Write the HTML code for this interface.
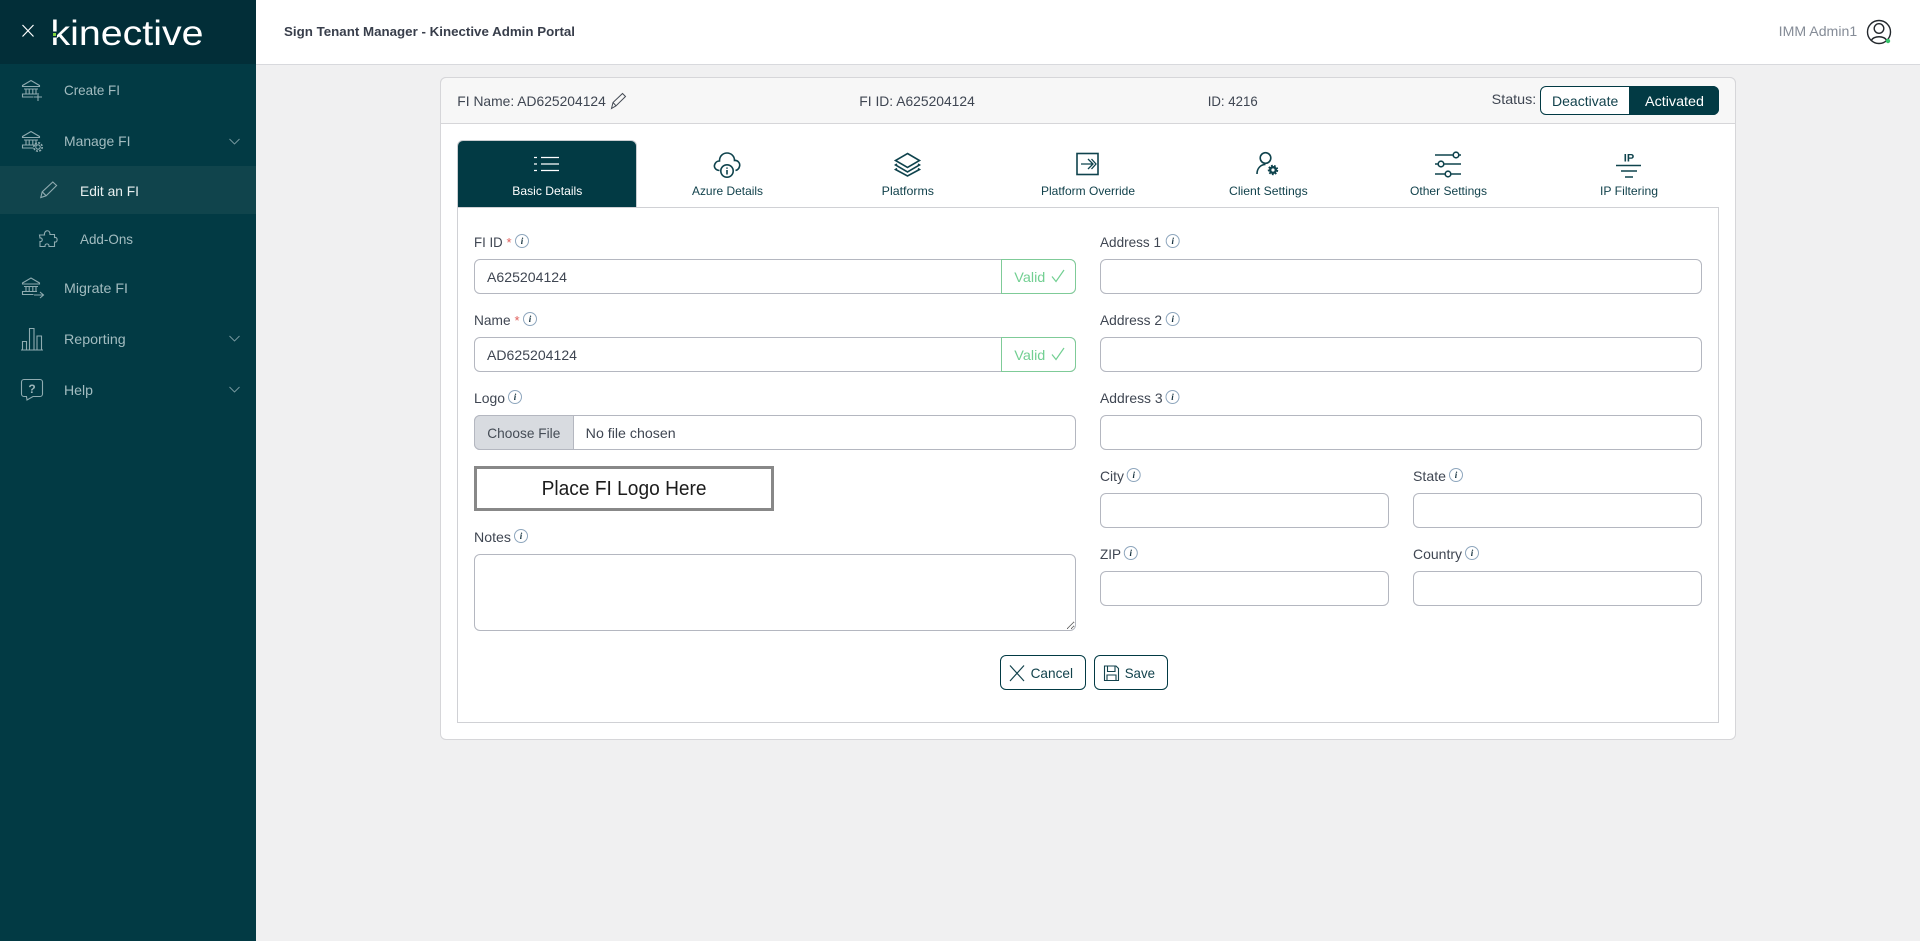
<!DOCTYPE html>
<html lang="en">
<head>
<meta charset="utf-8">
<title>Sign Tenant Manager - Kinective Admin Portal</title>
<style>
html,body{margin:0;padding:0;width:1920px;height:941px;overflow:hidden;background:#f0f0f1;font-family:"Liberation Sans",sans-serif}
.a{position:absolute;box-sizing:border-box}
input.f,textarea.f{position:absolute;box-sizing:border-box;border:1px solid #b4b7c0;border-radius:6px;background:#fff;margin:0;padding:0;outline:0}
textarea.f{resize:vertical}
#ov{position:absolute;left:0;top:0;pointer-events:none}
#ov text{font-family:"Liberation Sans",sans-serif;font-size:14px}
.s{fill:#a3bcc0}
.l{fill:#3f4652}
.ic{fill:none;stroke:#8fabb0;stroke-width:1.1}
.ch{fill:none;stroke:#7a9ba1;stroke-width:.9}
.tb{fill:none;stroke:#0f434d;stroke-width:1.6}
.ii{fill:#fff;stroke:#8ea6bd;stroke-width:1}
#ov text.it{font-family:"Liberation Serif",serif;font-size:9px;font-style:italic;font-weight:bold;fill:#16323f;text-anchor:middle}
#ov text.tt{font-size:12px;fill:#12424c}
</style>
</head>
<body>
<div class="a" style="left:0;top:0;width:256px;height:941px;background:#023a44"></div>
<div class="a" style="left:0;top:0;width:256px;height:64px;background:#022e38"></div>
<div class="a" style="left:0;top:166px;width:256px;height:48px;background:#10444c"></div>
<div class="a" style="left:256px;top:0;width:1664px;height:65px;background:#fff;border-bottom:1px solid #d8d9dd"></div>

<div class="a" style="left:440px;top:77px;width:1296px;height:663px;background:#fff;border:1px solid #d6d6d9;border-radius:6px"></div>
<div class="a" style="left:440px;top:77px;width:1296px;height:47px;background:#f7f7f7;border:1px solid #d6d6d9;border-radius:6px 6px 0 0"></div>
<div class="a" style="left:457px;top:207px;width:1262px;height:516px;background:#fff;border:1px solid #d0d1d5"></div>
<div class="a" style="left:457px;top:140px;width:180px;height:67px;background:#023a44;border:1px solid #c9cdd1;border-bottom:0;border-radius:6px 6px 0 0"></div>

<div class="a" style="left:1540px;top:86px;width:179px;height:29px;background:#fff;border:1px solid #023a44;border-radius:6px"></div>
<div class="a" style="left:1629px;top:86px;width:90px;height:29px;background:#023a44;border-radius:0 6px 6px 0"></div>

<input class="f" style="left:474px;top:259px;width:602px;height:35px" tabindex="-1">
<input class="f" style="left:474px;top:337px;width:602px;height:35px" tabindex="-1">
<div class="a" style="left:1001px;top:259px;width:75px;height:35px;border:1px solid #7fcb98;border-radius:0 6px 6px 0;background:#fff"></div>
<div class="a" style="left:1001px;top:337px;width:75px;height:35px;border:1px solid #7fcb98;border-radius:0 6px 6px 0;background:#fff"></div>
<div class="a" style="left:474px;top:415px;width:602px;height:35px;border:1px solid #b4b7c0;border-radius:6px;background:#fff"></div>
<div class="a" style="left:474px;top:415px;width:100px;height:35px;border:1px solid #b4b7c0;border-radius:6px 0 0 6px;background:#d8dbe0"></div>
<div class="a" style="left:474px;top:466px;width:300px;height:45px;border:3px solid #888;background:#fff"></div>
<textarea class="f" style="left:474px;top:554px;width:602px;height:77px" tabindex="-1"></textarea>

<input class="f" style="left:1100px;top:259px;width:602px;height:35px" tabindex="-1">
<input class="f" style="left:1100px;top:337px;width:602px;height:35px" tabindex="-1">
<input class="f" style="left:1100px;top:415px;width:602px;height:35px" tabindex="-1">
<input class="f" style="left:1100px;top:493px;width:289px;height:35px" tabindex="-1">
<input class="f" style="left:1413px;top:493px;width:289px;height:35px" tabindex="-1">
<input class="f" style="left:1100px;top:571px;width:289px;height:35px" tabindex="-1">
<input class="f" style="left:1413px;top:571px;width:289px;height:35px" tabindex="-1">

<div class="a" style="left:1000px;top:655px;width:86px;height:35px;border:1px solid #023a44;border-radius:6px;background:#fff"></div>
<div class="a" style="left:1094px;top:655px;width:74px;height:35px;border:1px solid #023a44;border-radius:6px;background:#fff"></div>

<svg id="ov" width="1920" height="941" viewBox="0 0 1920 941" xmlns="http://www.w3.org/2000/svg">
<defs>
<g id="bank" fill="none" stroke="#8fabb0" stroke-width="1.1">
<path d="M.5 6.500V5.500L9 .5L17.500 5.500V6.500Z"/>
<path d="M2 9H16M4 9.500V13.500M7.200 9.500V13.500M10.800 9.500V13.500M14 9.500V13.500"/>
<path d="M15 14H.5V17H11.500"/>
</g>
</defs>

<!-- sidebar -->
<path d="M22.500 25L33.500 36.500M33.500 25L22.500 36.500" stroke="#fff" stroke-width="1.200" fill="none"/>
<text x="50.500" y="45" textLength="153" lengthAdjust="spacingAndGlyphs" style="font-size:35px" fill="#fff">kinective</text>
<rect x="52" y="31.500" width="5" height="6" fill="#022e38"/>
<rect x="53" y="33" width="3" height="3" fill="#7fd23c"/>

<use href="#bank" x="22" y="80"/>
<path class="ic" d="M38 93V101M34 97H42"/>
<text class="s" x="64" y="95" textLength="56" lengthAdjust="spacingAndGlyphs">Create FI</text>

<use href="#bank" x="22" y="131"/>
<circle cx="38" cy="147" r="2.200" class="ic"/><circle cx="38" cy="147" r="4.200" fill="none" stroke="#8fabb0" stroke-width="1.600" stroke-dasharray="2 1.300"/>
<text class="s" x="64" y="146" textLength="66.500" lengthAdjust="spacingAndGlyphs">Manage FI</text>
<path class="ch" d="M229.500 139L234.500 144L239.500 139"/>

<path class="ic" d="M40.800 197.500L42.200 191.800L52.800 182L56.600 185.500L46.200 195.800ZM42.200 191.800L46.200 195.800"/>
<text x="80" y="196" textLength="59" lengthAdjust="spacingAndGlyphs" fill="#e8efef">Edit an FI</text>

<path class="ic" d="M39.500 235H44.500C43.500 230.500 50 228.500 50 234.500H54.500V237.500C58 236.500 58 243 54.500 242V246.500H49C49.500 243 44.500 243 45 246.500H40V241.500C43 242 43 237.500 40 238Z"/>
<text class="s" x="80" y="244" textLength="53" lengthAdjust="spacingAndGlyphs">Add-Ons</text>

<use href="#bank" x="22" y="277.500"/>
<path class="ic" d="M34 295H43M40 292L43.500 295L40 298"/>
<text class="s" x="64" y="293" textLength="64" lengthAdjust="spacingAndGlyphs">Migrate FI</text>

<path class="ic" d="M21 350H43M22.500 350V341.500H26.500V350M29.500 350V328.500H34V350M37 350V336H41.500V350"/>
<text class="s" x="64" y="344" textLength="61.700" lengthAdjust="spacingAndGlyphs">Reporting</text>
<path class="ch" d="M229.500 336L234.500 341L239.500 336"/>

<path class="ic" d="M24 379.500H40A2.500 2.500 0 0 1 42.500 382V394A2.500 2.500 0 0 1 40 396.500H33L27 400L26.500 396.500H24A2.500 2.500 0 0 1 21.500 394V382A2.500 2.500 0 0 1 24 379.500Z"/>
<text x="32" y="393" text-anchor="middle" style="font-size:12px;font-weight:bold" fill="#9db6ba">?</text>
<text class="s" x="64" y="395" textLength="29" lengthAdjust="spacingAndGlyphs">Help</text>
<path class="ch" d="M229.500 387L234.500 392L239.500 387"/>

<!-- top bar -->
<text x="284" y="36" textLength="291" lengthAdjust="spacingAndGlyphs" style="font-size:13px;font-weight:bold" fill="#383e4b">Sign Tenant Manager - Kinective Admin Portal</text>
<text x="1778.700" y="36" textLength="78.500" lengthAdjust="spacingAndGlyphs" fill="#858c97">IMM Admin1</text>
<circle cx="1879" cy="32" r="11.500" fill="none" stroke="#23282d" stroke-width="1.400"/>
<circle cx="1879" cy="28.500" r="4.800" fill="none" stroke="#23282d" stroke-width="1.400"/>
<path d="M1871.500 40.500C1873 35.500 1885 35.500 1886.500 40.500" fill="none" stroke="#23282d" stroke-width="1.400"/>
<circle cx="1888" cy="41" r="2.200" fill="#35c46a"/>

<!-- card header -->
<text class="l" x="457.300" y="106" textLength="148.500" lengthAdjust="spacingAndGlyphs">FI Name: AD625204124</text>
<path d="M611.500 108.500L613 102.500L622.500 93.500L625.500 96.500L616 105.800ZM613 102.500L616 105.800" fill="none" stroke="#454b55" stroke-width="1"/>
<text class="l" x="859.300" y="106" textLength="115.500" lengthAdjust="spacingAndGlyphs">FI ID: A625204124</text>
<text class="l" x="1207.700" y="106" textLength="50" lengthAdjust="spacingAndGlyphs">ID: 4216</text>
<text class="l" x="1491.700" y="104" textLength="44.600" lengthAdjust="spacingAndGlyphs">Status:</text>
<text x="1552" y="106" textLength="66.300" lengthAdjust="spacingAndGlyphs" fill="#12424c">Deactivate</text>
<text x="1645" y="106" textLength="59" lengthAdjust="spacingAndGlyphs" fill="#fff">Activated</text>

<!-- tab icons -->
<path d="M534 157.500H537M541 157.500H559M534 164H537M541 164H559M534 170.500H537M541 170.500H559" stroke="#fff" stroke-width="1.300" fill="none"/>
<path class="tb" d="M719.500 170.500C715 170 713 166.500 715.500 163C716.500 161.500 718 161 719.500 161C719.500 155 724 153 727 153C731 153 734.500 156 734.500 160.500C738 160 740.500 163.500 739.500 166.500C739 168.500 737.500 170 735.500 170.500"/>
<circle class="tb" cx="727" cy="171" r="6.200" style="fill:#fff"/>
<path d="M727 170V174.500M727 167.500V168.800" stroke="#0f434d" stroke-width="1.600" fill="none"/>
<path class="tb" d="M907.500 153.500L919.500 160.500L907.500 167.500L895.500 160.500Z"/>
<path class="tb" d="M897 164L895.500 165L907.500 172L919.500 165L918 164"/>
<path class="tb" d="M897 168.500L895.500 169.500L907.500 176L919.500 169.500L918 168.500"/>
<rect class="tb" x="1077" y="153.500" width="21" height="21"/>
<path class="tb" d="M1081 164H1092M1088 159L1093 164L1088 169M1091.500 159L1096 164L1091.500 169" style="stroke-width:1.300"/>
<circle class="tb" cx="1265.500" cy="158" r="5.300"/>
<path class="tb" d="M1257 174C1257 168 1261 164.500 1265.500 164.500"/>
<circle cx="1273" cy="170" r="2.800" fill="none" stroke="#0f434d" stroke-width="2.400"/>
<circle cx="1273" cy="170" r="4.400" fill="none" stroke="#0f434d" stroke-width="1.600" stroke-dasharray="1.800 1.300"/>
<path class="tb" d="M1435 155H1452.500M1459.500 155H1461M1435 164H1437.500M1444.500 164H1461M1435 174H1444.500M1451.500 174H1461"/>
<circle class="tb" cx="1456" cy="155" r="2.800"/><circle class="tb" cx="1441" cy="164" r="2.800"/><circle class="tb" cx="1448" cy="174" r="2.800"/>
<text x="1629" y="161.500" text-anchor="middle" style="font-size:11px;font-weight:bold" fill="#0f434d">IP</text>
<path d="M1616 165.500H1641M1621 171H1637M1625 177H1633" stroke="#0f434d" stroke-width="1.500" fill="none"/>

<!-- tab labels -->
<text x="512.300" y="195" textLength="70" lengthAdjust="spacingAndGlyphs" style="font-size:12px" fill="#fff">Basic Details</text>
<text class="tt" x="692" y="195" textLength="71" lengthAdjust="spacingAndGlyphs">Azure Details</text>
<text class="tt" x="881.700" y="195" textLength="52.300" lengthAdjust="spacingAndGlyphs">Platforms</text>
<text class="tt" x="1041" y="195" textLength="94" lengthAdjust="spacingAndGlyphs">Platform Override</text>
<text class="tt" x="1229" y="195" textLength="78.700" lengthAdjust="spacingAndGlyphs">Client Settings</text>
<text class="tt" x="1410" y="195" textLength="77" lengthAdjust="spacingAndGlyphs">Other Settings</text>
<text class="tt" x="1600" y="195" textLength="58" lengthAdjust="spacingAndGlyphs">IP Filtering</text>

<!-- labels -->
<text class="l" x="474" y="247" textLength="28.700" lengthAdjust="spacingAndGlyphs">FI ID</text>
<text x="506.500" y="247" fill="#e0605c" style="font-size:13px">*</text>
<circle class="ii" cx="522" cy="241" r="6.500"/><text class="it" x="522" y="244">i</text>

<text class="l" x="474" y="325" textLength="36.600" lengthAdjust="spacingAndGlyphs">Name</text>
<text x="514.500" y="325" fill="#e0605c" style="font-size:13px">*</text>
<circle class="ii" cx="530" cy="319" r="6.500"/><text class="it" x="530" y="322">i</text>

<text class="l" x="474" y="403" textLength="31" lengthAdjust="spacingAndGlyphs">Logo</text>
<circle class="ii" cx="515" cy="397" r="6.500"/><text class="it" x="515" y="400">i</text>

<text class="l" x="474" y="542" textLength="37" lengthAdjust="spacingAndGlyphs">Notes</text>
<circle class="ii" cx="521" cy="536" r="6.500"/><text class="it" x="521" y="539">i</text>

<text class="l" x="1100" y="247" textLength="61" lengthAdjust="spacingAndGlyphs">Address 1</text>
<circle class="ii" cx="1172.700" cy="241" r="6.500"/><text class="it" x="1172.700" y="244">i</text>
<text class="l" x="1100" y="325" textLength="62" lengthAdjust="spacingAndGlyphs">Address 2</text>
<circle class="ii" cx="1172.700" cy="319" r="6.500"/><text class="it" x="1172.700" y="322">i</text>
<text class="l" x="1100" y="403" textLength="62.600" lengthAdjust="spacingAndGlyphs">Address 3</text>
<circle class="ii" cx="1172.500" cy="397" r="6.500"/><text class="it" x="1172.500" y="400">i</text>
<text class="l" x="1100" y="481" textLength="24" lengthAdjust="spacingAndGlyphs">City</text>
<circle class="ii" cx="1133.700" cy="475" r="6.500"/><text class="it" x="1133.700" y="478">i</text>
<text class="l" x="1413" y="481" textLength="33" lengthAdjust="spacingAndGlyphs">State</text>
<circle class="ii" cx="1456" cy="475" r="6.500"/><text class="it" x="1456" y="478">i</text>
<text class="l" x="1100" y="559" textLength="21" lengthAdjust="spacingAndGlyphs">ZIP</text>
<circle class="ii" cx="1130.800" cy="553" r="6.500"/><text class="it" x="1130.800" y="556">i</text>
<text class="l" x="1413" y="559" textLength="49" lengthAdjust="spacingAndGlyphs">Country</text>
<circle class="ii" cx="1472" cy="553" r="6.500"/><text class="it" x="1472" y="556">i</text>

<!-- values -->
<text class="l" x="487" y="282" textLength="80" lengthAdjust="spacingAndGlyphs">A625204124</text>
<text class="l" x="487" y="360" textLength="90" lengthAdjust="spacingAndGlyphs">AD625204124</text>
<text x="1014.300" y="282" textLength="31" lengthAdjust="spacingAndGlyphs" fill="#72cf92">Valid</text>
<path d="M1052 276.500L1056 281.500L1064 270" fill="none" stroke="#72cf92" stroke-width="1.200"/>
<text x="1014.300" y="360" textLength="31" lengthAdjust="spacingAndGlyphs" fill="#72cf92">Valid</text>
<path d="M1052 354.500L1056 359.500L1064 348" fill="none" stroke="#72cf92" stroke-width="1.200"/>
<text x="487.300" y="438" textLength="73" lengthAdjust="spacingAndGlyphs" fill="#454c56">Choose File</text>
<text class="l" x="585.700" y="438" textLength="90" lengthAdjust="spacingAndGlyphs">No file chosen</text>
<text x="541.600" y="495" textLength="165" lengthAdjust="spacingAndGlyphs" style="font-size:20px" fill="#1c1c1c">Place FI Logo Here</text>

<!-- buttons -->
<path d="M1010 665.500L1024 681M1024 665.500L1010 681" stroke="#12424c" stroke-width="1.200" fill="none"/>
<text x="1030.600" y="678" textLength="42.400" lengthAdjust="spacingAndGlyphs" fill="#12424c">Cancel</text>
<path d="M1104.500 666H1116L1118.500 668.500V680.500H1104.500ZM1107.500 666V671.500H1115V666M1107 680.500V675H1116V680.500" fill="none" stroke="#12424c" stroke-width="1.100"/>
<text x="1124.700" y="678" textLength="30.300" lengthAdjust="spacingAndGlyphs" fill="#12424c">Save</text>
</svg>
</body>
</html>
